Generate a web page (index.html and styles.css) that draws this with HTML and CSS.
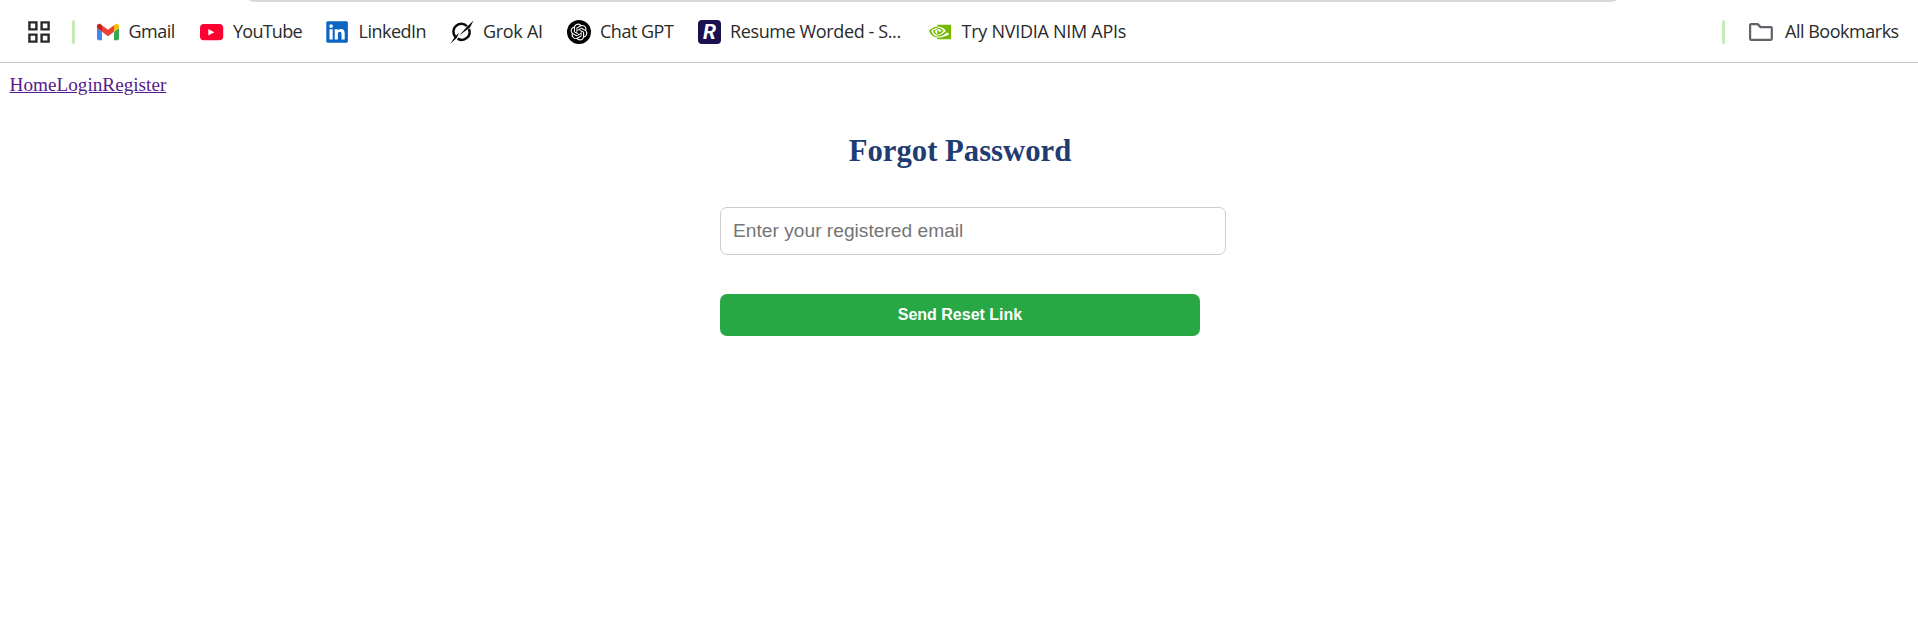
FILE: index.html
```html
<!DOCTYPE html>
<html lang="en">
<head>
<meta charset="utf-8">
<title>Forgot Password</title>
<link rel="stylesheet" href="styles.css">
</head>
<body>
<header class="browser">
  <div class="address-edge"></div>
  <div class="bookmarks">
    <svg class="apps" width="22" height="22" viewBox="0 0 22 22" fill="none" stroke="#26282b" stroke-width="2.4"><path d="M1.4 1.4h7v7h-7zM13.6 1.4h7v7h-7zM1.4 13.6h7v7h-7zM13.6 13.6h7v7h-7z"/></svg>
    <span class="divider"></span>
    <div class="bookmark gmail">
      <svg width="24" height="24" viewBox="0 0 24 24"><g transform="translate(1 3.8) scale(.25) translate(-52 -42)"><path fill="#4285f4" d="M58 108h14V74L52 59v43c0 3.3 2.7 6 6 6"/><path fill="#34a853" d="M120 108h14c3.3 0 6-2.7 6-6V59l-20 15"/><path fill="#fbbc04" d="M120 48v26l20-15v-8c0-7.4-8.5-11.6-14.4-7.2"/><path fill="#ea4335" d="M72 74V48l24 18 24-18v26L96 92"/><path fill="#c5221f" d="M52 51v8l20 15V48l-5.6-4.2c-5.9-4.4-14.4-.2-14.4 7.2"/></g></svg>
      <span class="label">Gmail</span>
    </div>
    <div class="bookmark youtube">
      <svg width="24" height="24" viewBox="0 0 24 24"><rect x="0" y="4" width="23.2" height="16.2" rx="3.8" fill="#ff0033"/><path fill="#fff" d="M8.3 9v6.4l6-3.2z"/></svg>
      <span class="label">YouTube</span>
    </div>
    <div class="bookmark linkedin">
      <svg width="24" height="24" viewBox="0 0 24 24"><g transform="translate(.3 1.2) scale(.9)"><path fill="#0a66c2" d="M20.447 20.452h-3.554v-5.569c0-1.328-.027-3.037-1.852-3.037-1.853 0-2.136 1.445-2.136 2.939v5.667H9.351V9h3.414v1.561h.046c.477-.9 1.637-1.85 3.37-1.85 3.601 0 4.267 2.37 4.267 5.455v6.286zM5.337 7.433a2.062 2.062 0 0 1-2.063-2.065 2.064 2.064 0 1 1 2.063 2.065zm1.782 13.019H3.555V9h3.564v11.452zM22.225 0H1.771C.792 0 0 .774 0 1.729v20.542C0 23.227.792 24 1.771 24h20.451C23.2 24 24 23.227 24 22.271V1.729C24 .774 23.2 0 22.222 0h.003z"/></g></svg>
      <span class="label">LinkedIn</span>
    </div>
    <div class="bookmark grok">
      <svg width="24" height="24" viewBox="0 0 24 24"><g fill="none" stroke="#0b0b0b" stroke-width="2.5"><path d="M5.6 17.2A7.8 7.8 0 0 1 16.9 6.2"/><path d="M18.9 8.9A7.8 7.8 0 0 1 7.6 18.6"/></g><path fill="#0b0b0b" d="M23.6.6 20 7.5 9.2 15.4 17.2 6.4zM.4 23.8 5.4 16 9 13 6.7 18z"/></svg>
      <span class="label">Grok AI</span>
    </div>
    <div class="bookmark chatgpt">
      <svg width="24" height="24" viewBox="0 0 24 24"><circle cx="12" cy="12" r="12" fill="#000"/><path fill="#fff" transform="translate(3.6 3.6) scale(.7)" d="M22.2819 9.8211a5.9847 5.9847 0 0 0-.5157-4.9108 6.0462 6.0462 0 0 0-6.5098-2.9A6.0651 6.0651 0 0 0 4.9807 4.1818a5.9847 5.9847 0 0 0-3.9977 2.9 6.0462 6.0462 0 0 0 .7427 7.0966 5.98 5.98 0 0 0 .511 4.9107 6.051 6.051 0 0 0 6.5146 2.9001A5.9847 5.9847 0 0 0 13.2599 24a6.0557 6.0557 0 0 0 5.7718-4.2058 5.9894 5.9894 0 0 0 3.9977-2.9001 6.0557 6.0557 0 0 0-.7475-7.0729zm-9.022 12.6081a4.4755 4.4755 0 0 1-2.8764-1.0408l.1419-.0804 4.7783-2.7582a.7948.7948 0 0 0 .3927-.6813v-6.7369l2.02 1.1686a.071.071 0 0 1 .038.052v5.5826a4.504 4.504 0 0 1-4.4945 4.4944zm-9.6607-4.1254a4.4708 4.4708 0 0 1-.5346-3.0137l.142.0852 4.783 2.7582a.7712.7712 0 0 0 .7806 0l5.8428-3.3685v2.3324a.0804.0804 0 0 1-.0332.0615L9.74 19.9502a4.4992 4.4992 0 0 1-6.1408-1.6464zM2.3408 7.8956a4.485 4.485 0 0 1 2.3655-1.9728V11.6a.7664.7664 0 0 0 .3879.6765l5.8144 3.3543-2.0201 1.1685a.0757.0757 0 0 1-.071 0l-4.8303-2.7865A4.504 4.504 0 0 1 2.3408 7.872zm16.5963 3.8558L13.1038 8.364 15.1192 7.2a.0757.0757 0 0 1 .071 0l4.8303 2.7913a4.4944 4.4944 0 0 1-.6765 8.1042v-5.6772a.79.79 0 0 0-.407-.667zm2.0107-3.0231l-.142-.0852-4.7735-2.7818a.7759.7759 0 0 0-.7854 0L9.409 9.2297V6.8974a.0662.0662 0 0 1 .0284-.0615l4.8303-2.7866a4.4992 4.4992 0 0 1 6.6802 4.66zM8.3065 12.863l-2.02-1.1638a.0804.0804 0 0 1-.038-.0567V6.0742a4.4992 4.4992 0 0 1 7.3757-3.4537l-.142.0805L8.704 5.459a.7948.7948 0 0 0-.3927.6813zm1.0976-2.3654l2.602-1.4998 2.6069 1.4998v2.9994l-2.5974 1.4997-2.6067-1.4997Z"/></svg>
      <span class="label">Chat GPT</span>
    </div>
    <div class="bookmark resume">
      <span class="resume-logo">R</span>
      <span class="label">Resume Worded - S...</span>
    </div>
    <div class="bookmark nvidia">
      <svg width="24" height="24" viewBox="0 0 24 24"><path fill="#76b900" transform="translate(0 .9) scale(.92)" d="M8.948 8.798v-1.43a6.7 6.7 0 0 1 .424-.018c3.922-.124 6.493 3.374 6.493 3.374s-2.774 3.851-5.75 3.851c-.398 0-.787-.062-1.158-.185v-4.346c1.528.185 1.837.857 2.747 2.385l2.04-1.714s-1.492-1.952-4-1.952a6.016 6.016 0 0 0-.796.035m0-4.735v2.138l.424-.027c5.45-.185 9.01 4.47 9.01 4.47s-4.08 4.964-8.33 4.964c-.37 0-.733-.035-1.095-.097v1.325c.3.035.61.062.91.062 3.957 0 6.82-2.023 9.593-4.408.459.371 2.34 1.263 2.73 1.652-2.633 2.208-8.772 3.984-12.253 3.984-.335 0-.653-.018-.971-.053v1.864H24V4.063zm0 10.326v1.131c-3.657-.654-4.673-4.46-4.673-4.46s1.758-1.944 4.673-2.262v1.237H8.94c-1.528-.186-2.73 1.245-2.73 1.245s.68 2.412 2.739 3.11M2.456 10.9s2.164-3.197 6.5-3.533V6.201C4.153 6.59 0 10.653 0 10.653s2.35 6.802 8.948 7.42v-1.237c-4.84-.6-6.492-5.936-6.492-5.936z"/></svg>
      <span class="label">Try NVIDIA NIM APIs</span>
    </div>
    <span class="divider divider-right"></span>
    <div class="bookmark all">
      <svg width="24" height="24" viewBox="0 0 24 24" fill="none" stroke="#5f6368" stroke-width="2.2" stroke-linejoin="round"><path d="M2.1 4.1h6.5l3 3h10.2a1 1 0 0 1 1 1v10.7a1.1 1.1 0 0 1-1.1 1.1H2.2a1.1 1.1 0 0 1-1.1-1.1V5.1a1 1 0 0 1 1-1z"/></svg>
      <span class="label">All Bookmarks</span>
    </div>
  </div>
</header>
<nav class="links"><a href="#">Home</a><a href="#">Login</a><a href="#">Register</a></nav>
<main class="reset">
  <h2 class="title">Forgot Password</h2>
  <form class="form">
    <input class="email" type="email" placeholder="Enter your registered email">
    <button class="submit" type="button">Send Reset Link</button>
  </form>
</main>
</body>
</html>
```
FILE: styles.css
```css
body {
  margin: 0;
  background: #fff;
  font-family: "Liberation Serif", "Times New Roman", serif;
  font-size: 19.2px;
}
.browser {
  height: 62px;
  border-bottom: 1px solid #c9c9c9;
}
.address-edge {
  width: 1368px;
  height: 2px;
  margin-left: 249px;
  background: #d9d9d9;
  border-radius: 0 0 10px 10px / 0 0 2px 2px;
}
.bookmarks {
  display: flex;
  align-items: center;
  height: 60px;
  padding: 0 20px 0 28px;
  box-sizing: border-box;
  font-family: "Open Sans", "Noto Sans", sans-serif;
  font-size: 18px;
  font-weight: 400;
  color: #2a2a2a;
}
.divider {
  width: 3px;
  height: 24px;
  border-radius: 2px;
  background: #c7e9b8;
  margin-left: 22px;
}
.divider-right { margin-left: auto; }
.bookmark {
  display: flex;
  align-items: center;
  height: 24px;
}
.bookmark svg { flex: none; }
.label {
  white-space: nowrap;
  line-height: 24px;
  padding-bottom: 2px;
}
.gmail { width: 79px; margin-left: 21px; gap: 8.5px; letter-spacing: -0.5px; }
.youtube { width: 102px; margin-left: 25px; gap: 9px; letter-spacing: -0.75px; }
.linkedin { width: 100px; margin-left: 24px; gap: 8.5px; letter-spacing: -0.5px; }
.grok { width: 93px; margin-left: 24px; gap: 9px; letter-spacing: -0.3px; }
.chatgpt { width: 107px; margin-left: 24px; gap: 9px; letter-spacing: -0.5px; }
.resume { width: 203px; margin-left: 24px; gap: 9px; letter-spacing: -0.38px; }
.nvidia { width: 198px; margin-left: 28px; gap: 8.5px; letter-spacing: -0.27px; }
.all { width: 149px; margin-left: 24px; gap: 12px; letter-spacing: -0.48px; }
.resume-logo {
  flex: none;
  width: 23px;
  height: 24px;
  border-radius: 4px;
  background: #1b1150;
  color: #fff;
  font: italic 700 21px/24px Roboto, sans-serif;
  letter-spacing: 0;
  text-align: center;
}
.links {
  display: flex;
  padding: 10px 9.6px 0;
  line-height: 23px;
}
.links a { color: #551a8b; }
.reset {
  width: 480px;
  margin: 37px auto 0;
  padding-left: 2px;
}
.title {
  margin: 0;
  color: #1f3c73;
  font-size: 30.7px;
  line-height: 37px;
  text-align: center;
}
.form {
  display: flex;
  flex-direction: column;
  margin-top: 37px;
}
.email {
  width: 506px;
  height: 48px;
  box-sizing: border-box;
  padding: 0 12px;
  border: 1px solid #ccc;
  border-radius: 7px;
  font: 19.2px "Liberation Sans", Arial, sans-serif;
}
.email::placeholder { color: #757575; }
.submit {
  height: 42px;
  margin-top: 39px;
  padding-bottom: 2px;
  border: 0;
  border-radius: 7px;
  background: #28a745;
  color: #fff;
  font: 700 16px "Liberation Sans", Arial, sans-serif;
}
```
